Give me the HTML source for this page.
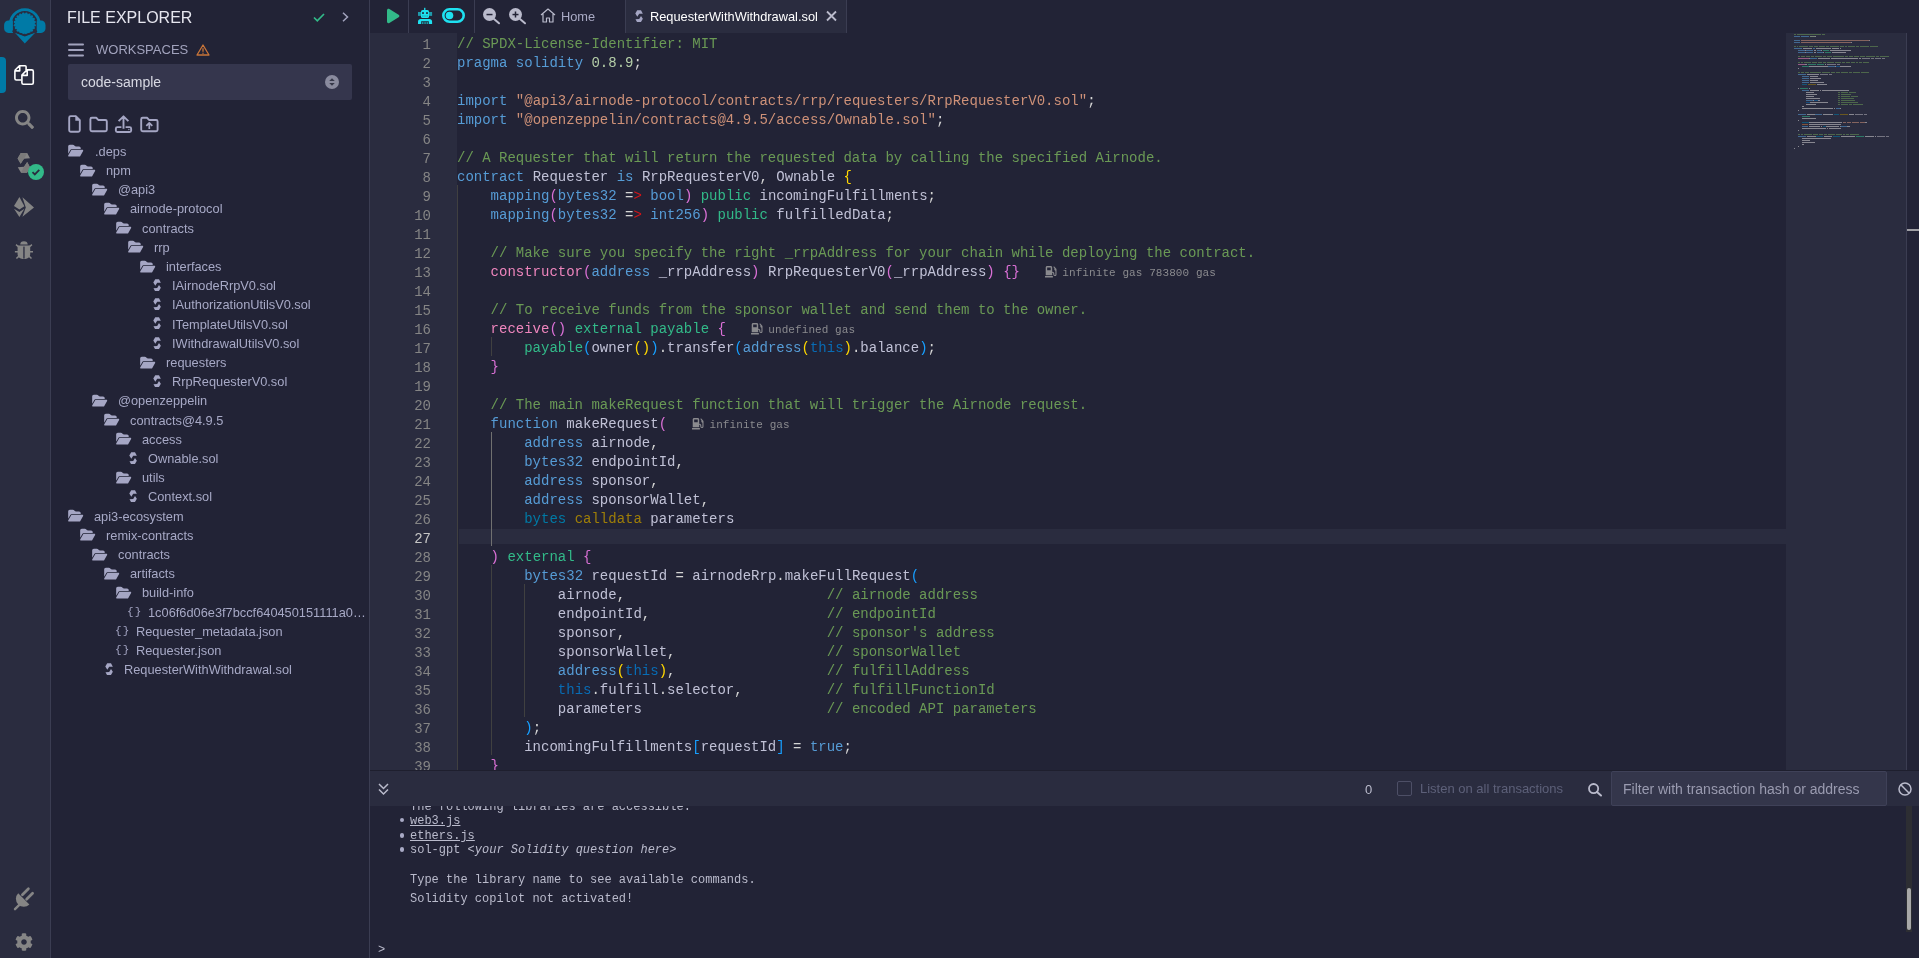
<!DOCTYPE html>
<html><head><meta charset="utf-8">
<style>
*{box-sizing:border-box;margin:0;padding:0}
html,body{width:1919px;height:958px;overflow:hidden;background:#222336;font-family:"Liberation Sans",sans-serif;color:#babbcc}
svg{position:absolute;overflow:visible}
#icons{position:absolute;left:0;top:0;width:50px;height:958px;background:#2a2c3f}
#iconsborder{position:absolute;left:50px;top:0;width:1px;height:958px;background:#3b3d52}
#side{position:absolute;left:51px;top:0;width:318px;height:958px;background:#222336}
#sideborder{position:absolute;left:369px;top:0;width:1px;height:958px;background:#3b3d52}
#gutter{position:absolute;left:370px;top:33px;width:87px;height:737px;background:#2a2c3f}
#editor{position:absolute;left:0;top:0;width:1919px;height:770px;overflow:hidden}
.cl{position:absolute;left:457px;height:19px;line-height:19px;padding-top:2px;font-family:"Liberation Mono",monospace;font-size:14px;color:#d4d4d4;white-space:pre}
.lnum{position:absolute;left:380px;width:51px;text-align:right;height:19px;line-height:19px;padding-top:3px;font-family:"Liberation Mono",monospace;font-size:14px;color:#858585}
.lnum.cur{color:#c6c6c6}
.id{color:#c0c1d6}.c{color:#6a9955}.k{color:#569cd6}.s{color:#ce9178}.n{color:#b5cea8}
.b1{color:#ffd700}.b2{color:#da70d6}.b3{color:#179fff}.r{color:#d31519}
.g{color:#32ba89}.p{color:#ee85bd}.i{color:#086cb5}.bb{color:#007aa6}.l{color:#9e7e08}
.gas{position:absolute;top:3px;margin-left:1px;font-size:11px;letter-spacing:.08px;color:#8a8a8e;white-space:pre}
.pump{position:relative;width:11.5px;height:11.5px;vertical-align:-1px;margin-right:6px}
#curline{position:absolute;left:459px;top:529px;width:1327px;height:15px;background:#2a2c3f}
.guide{position:absolute;width:1px;background:#404040}
#minimap{position:absolute;left:1786px;top:33px;width:120px;height:737px;background:#2a2c3f}
#vscroll{position:absolute;left:1906px;top:33px;width:13px;height:737px;border-left:1px solid #3b3d52}
#tbar{position:absolute;left:370px;top:771px;width:1549px;height:35px;background:#2a2c3f}
#tline{position:absolute;left:370px;top:770px;width:1549px;height:1px;background:#1e1f2e}
.term{position:absolute;font-family:"Liberation Mono",monospace;font-size:12px;color:#babbcc;white-space:pre;line-height:15px}
.tr{position:absolute;font-size:12.8px;color:#a7a9c6;white-space:pre;height:19px;line-height:19px}
.tab{position:absolute;top:0;height:33px}
</style></head><body><div id="root" style="position:absolute;left:0;top:0;width:1919px;height:958px;will-change:transform">
<div id="icons">
  <svg style="left:0;top:0" width="50" height="50" viewBox="0 0 50 50">
    <g fill="#007aa6">
      <path d="M10.7 26.3 A14.3 14.3 0 1 1 38.9 26.3" stroke="#007aa6" stroke-width="2.9" fill="none"/>
      <path d="M8.5 20.5h4.4v12.4H8.5c-2.5 0-4.4-2-4.4-4.4v-3.6c0-2.4 1.9-4.4 4.4-4.4z"/>
      <path d="M41.1 20.5h-4.4v12.4h4.4c2.5 0 4.4-2 4.4-4.4v-3.6c0-2.4-1.9-4.4-4.4-4.4z"/>
      <circle cx="24.8" cy="23.6" r="10"/><circle cx="34.58" cy="25.15" r="1.25"/><circle cx="33.62" cy="28.09" r="1.25"/><circle cx="31.80" cy="30.60" r="1.25"/><circle cx="29.29" cy="32.42" r="1.25"/><circle cx="26.35" cy="33.38" r="1.25"/><circle cx="23.25" cy="33.38" r="1.25"/><circle cx="20.31" cy="32.42" r="1.25"/><circle cx="17.80" cy="30.60" r="1.25"/><circle cx="15.98" cy="28.09" r="1.25"/><circle cx="15.02" cy="25.15" r="1.25"/><circle cx="15.02" cy="22.05" r="1.25"/><circle cx="15.98" cy="19.11" r="1.25"/><circle cx="17.80" cy="16.60" r="1.25"/><circle cx="20.31" cy="14.78" r="1.25"/><circle cx="23.25" cy="13.82" r="1.25"/><circle cx="26.35" cy="13.82" r="1.25"/><circle cx="29.29" cy="14.78" r="1.25"/><circle cx="31.80" cy="16.60" r="1.25"/><circle cx="33.62" cy="19.11" r="1.25"/><circle cx="34.58" cy="22.05" r="1.25"/>
      <polygon points="14.7,32.6 24.8,36.6 35.4,32.6 24.8,43.6"/>
      <polyline points="12.5,31 24.8,35.3 37.1,31" stroke="#2a2c3f" stroke-width="1.5" fill="none"/>
    </g>
  </svg>
  <div style="position:absolute;left:0;top:57px;width:6px;height:36px;background:#007aa6;border-radius:0 4px 4px 0"></div>
  <svg style="left:14px;top:65px" width="21" height="21" viewBox="0 0 21 21">
    <g fill="none" stroke="#fff" stroke-width="1.6" stroke-linejoin="round">
      <path d="M0.9 5.3L5.4 0.8H11.1Q12.1 0.8 12.1 1.8V4.9M7.1 15H2.4Q0.9 15 0.9 13.5V5.3M5.7 0.8V5.9H0.9"/>
      <path d="M7.9 10L13 4.9H17.8Q19.3 4.9 19.3 6.4V17.8Q19.3 19.3 17.8 19.3H9.4Q7.9 19.3 7.9 17.8ZM13.2 4.9V10.4H7.9"/>
    </g>
  </svg>
  <svg style="left:15px;top:110px" width="19" height="19" viewBox="0 0 512 512"><path fill="#858585" d="M505 442.7L405.3 343c-4.5-4.5-10.6-7-17-7H372c27.6-35.3 44-79.7 44-128C416 93.1 322.9 0 208 0S0 93.1 0 208s93.1 208 208 208c48.3 0 92.7-16.4 128-44v16.3c0 6.4 2.5 12.5 7 17l99.7 99.7c9.4 9.4 24.6 9.4 33.9 0l28.3-28.3c9.4-9.4 9.4-24.6.1-34zM208 336c-70.7 0-128-57.2-128-128 0-70.7 57.2-128 128-128 70.7 0 128 57.2 128 128 0 70.7-57.2 128-128 128z"/></svg>
  <svg style="left:17px;top:153px" width="14" height="20" viewBox="0 0 14 20">
    <polygon points="3.8,0 10.2,0 13,5.2 7,5.8 3.6,10.7 0.6,5.4" fill="#858585"/>
    <polygon points="3.8,0 10.2,0 7,5.8 3.6,10.7 0.6,5.4" fill="#7a7a7a"/>
    <polygon points="10.2,9 13,14.3 10,19.7 4,19.7 0.8,14.3 7,13.7" fill="#858585"/>
    <polygon points="10.2,9 13,14.3 10,19.7 4,19.7 7,13.7" fill="#7a7a7a"/>
  </svg>
  <svg style="left:28px;top:164px" width="16" height="16" viewBox="0 0 16 16">
    <circle cx="8" cy="8" r="8" fill="#32ba89"/>
    <path d="M4.5 8.2l2.3 2.2 4.5-4.5" stroke="#2a2c3f" stroke-width="1.8" fill="none"/>
  </svg>
  <svg style="left:10px;top:192px" width="30" height="30" viewBox="10 192 30 30">
    <g fill="#858585">
      <polygon points="19.4,196.9 24.4,206.3 19.4,209.4 14,206"/>
      <polygon points="14,208.8 19.4,212 24.4,208.8 19.4,217"/>
      <polygon points="22.4,197.3 34,207.4 22.4,216.8 25.8,207.4"/>
    </g>
  </svg>
  <svg style="left:10px;top:236px" width="30" height="30" viewBox="10 236 30 30">
    <g fill="#858585">
      <path d="M20.2 244.6a3.75 3.4 0 0 1 7.5 0z"/>
      <path d="M17.6 245.6h12.6v8.4a5 5 0 0 1-5 5h-2.6a5 5 0 0 1-5-5z"/>
    </g>
    <g stroke="#858585" stroke-width="1.5" fill="none">
      <path d="M16 244.6l3 2.6M31.9 244.6l-3 2.6M14.9 251.8h3.5M33 251.8h-3.5M16.4 258.5l2.8-2.6M31.5 258.5l-2.8-2.6"/>
    </g>
    <rect x="23.3" y="246.6" width="1.3" height="12" fill="#2a2c3f"/>
  </svg>
  <svg style="left:0;top:880px" width="50" height="40" viewBox="0 0 50 40">
    <g stroke="#858585" stroke-linecap="round" fill="none">
      <path d="M28.4 8.8L22.4 14.8M32.6 13.2L26.6 19.2" stroke-width="2.7"/>
      <path d="M20.8 23.4L15 29.2" stroke-width="2.4"/>
    </g>
    <path d="M19.8 11.6L31 22.8A7.9 7.9 0 0 1 19.8 11.6z" fill="#858585" transform="translate(-1.6 1.6)"/>
  </svg>
  <svg style="left:15px;top:933px" width="18" height="18" viewBox="0 0 512 512"><path fill="#858585" d="M487.4 315.7l-42.6-24.6c4.3-23.2 4.3-47 0-70.2l42.6-24.6c4.9-2.8 7.1-8.6 5.5-14-11.1-35.6-30-67.8-54.7-94.6-3.8-4.1-10-5.1-14.8-2.3L380.8 110c-17.9-15.4-38.5-27.3-60.8-35.1V25.8c0-5.6-3.9-10.5-9.4-11.7-36.7-8.2-74.3-7.8-109.2 0-5.5 1.2-9.4 6.1-9.4 11.7V75c-22.2 7.9-42.8 19.8-60.8 35.1L88.7 85.5c-4.9-2.8-11-1.9-14.8 2.3-24.7 26.7-43.6 58.9-54.7 94.6-1.7 5.4.6 11.2 5.5 14L67.3 221c-4.3 23.2-4.3 47 0 70.2l-42.6 24.6c-4.9 2.8-7.1 8.6-5.5 14 11.1 35.6 30 67.8 54.7 94.6 3.8 4.1 10 5.1 14.8 2.3l42.6-24.6c17.9 15.4 38.5 27.3 60.8 35.1v49.2c0 5.6 3.9 10.5 9.4 11.7 36.7 8.2 74.3 7.8 109.2 0 5.5-1.2 9.4-6.1 9.4-11.7v-49.2c22.2-7.9 42.8-19.8 60.8-35.1l42.6 24.6c4.9 2.8 11 1.9 14.8-2.3 24.7-26.7 43.6-58.9 54.7-94.6 1.5-5.5-.7-11.3-5.6-14.1zM256 336c-44.1 0-80-35.9-80-80s35.9-80 80-80 80 35.9 80 80-35.9 80-80 80z"/></svg>
</div>
<div id="iconsborder"></div>
<div id="side">
<div class="tr" style="left:16px;top:6px;font-size:16px;color:#e6e6ef;height:24px;line-height:24px">FILE EXPLORER</div>
<svg style="left:262px;top:13px" width="12" height="9" viewBox="0 0 12 9"><path d="M1 4.5l3.3 3.3L11 1" stroke="#32ba89" stroke-width="1.7" fill="none"/></svg>
<svg style="left:291px;top:12px" width="7" height="10" viewBox="0 0 7 10"><path d="M1 .8l4.5 4.2L1 9.2" stroke="#a2a3bd" stroke-width="1.5" fill="none"/></svg>
<svg style="left:17px;top:43px" width="16" height="14" viewBox="0 0 16 14"><g fill="#a2a3bd"><rect x="0" y="0.5" width="16" height="2" rx="1"/><rect x="0" y="6" width="16" height="2" rx="1"/><rect x="0" y="11.5" width="16" height="2" rx="1"/></g></svg>
<div class="tr" style="left:45px;top:40px;font-size:13px;color:#a2a3bd">WORKSPACES</div>
<svg style="left:145px;top:44px" width="14" height="12" viewBox="0 0 14 12"><path d="M7 1L13 11H1z" stroke="#c97539" stroke-width="1.3" fill="none" stroke-linejoin="round"/><path d="M7 4.3v3.4" stroke="#c97539" stroke-width="1.3"/><circle cx="7" cy="9.3" r=".7" fill="#c97539"/></svg>
<div style="position:absolute;left:17px;top:64px;width:284px;height:36px;background:#35364d;border-radius:2px"></div>
<div class="tr" style="left:30px;top:72px;font-size:14px;color:#d8d9e3;height:20px;line-height:20px">code-sample</div>
<svg style="left:274px;top:75px" width="14" height="14" viewBox="0 0 14 14"><circle cx="7" cy="7" r="7" fill="#8a8b9e"/><path d="M4.2 6L7 3.3 9.8 6zM4.2 8L7 10.7 9.8 8z" fill="#363849"/></svg>
<svg style="left:11px;top:110px" width="100" height="30" viewBox="62 110 100 30"><g fill="none" stroke="#a5a6c4" stroke-width="1.9" stroke-linejoin="round"><path d="M70.7 116.15h5.1l4 4v10.1q0 1.5-1.5 1.5h-7.6q-1.5 0-1.5-1.5v-12.6q0-1.5 1.5-1.5z"/><path d="M91.9 117.75h4.3l2.3 2.3h6.8q1.5 0 1.5 1.5v8.2q0 1.5-1.5 1.5h-13.4q-1.5 0-1.5-1.5v-10.5q0-1.5 1.5-1.5z"/><path d="M121.4 127.15h-4.05q-1.5 0-1.5 1.5v1.8q0 1.5 1.5 1.5h12.3q1.5 0 1.5-1.5v-1.8q0-1.5-1.5-1.5h-4.05M123.5 116.5v12.3M118.6 121.2l4.9-4.9 4.9 4.9"/><path d="M142.7 117.75h4.3l2.3 2.3h6.8q1.5 0 1.5 1.5v8.2q0 1.5-1.5 1.5h-13.4q-1.5 0-1.5-1.5v-10.5q0-1.5 1.5-1.5z"/><path d="M149.3 123v6M146.3 125.8l3-3 3 3" stroke-width="1.7"/></g><polygon points="75.3,115.6 80.4,120.7 75.3,120.7" fill="#a5a6c4"/><polygon points="128.3,128.7 130,129.5 128.3,130.3" fill="#a5a6c4"/></svg>
<svg style="left:16.8px;top:144.4px" width="15.4" height="13.4" viewBox="0 0 576 512"><path fill="#a5a6c4" d="M88.7 223.8L0 375.8V96C0 60.7 28.7 32 64 32H181.5c17 0 33.3 6.7 45.3 18.7l26.5 26.5c12 12 28.3 18.7 45.3 18.7H416c35.3 0 64 28.7 64 64v32H144c-22.8 0-43.8 12.1-55.3 31.8zm27.6 16.1C122.1 230 132.6 224 144 224H544c11.5 0 22 6.1 27.7 16.1s5.7 22.2-.1 32.1l-112 192C453.9 474 443.4 480 432 480H32c-11.5 0-22-6.1-27.7-16.1s-5.7-22.2 .1-32.1l112-192z"/></svg>
<div class="tr" style="left:44px;top:141.8px">.deps</div>
<svg style="left:28.8px;top:163.6px" width="15.4" height="13.4" viewBox="0 0 576 512"><path fill="#a5a6c4" d="M88.7 223.8L0 375.8V96C0 60.7 28.7 32 64 32H181.5c17 0 33.3 6.7 45.3 18.7l26.5 26.5c12 12 28.3 18.7 45.3 18.7H416c35.3 0 64 28.7 64 64v32H144c-22.8 0-43.8 12.1-55.3 31.8zm27.6 16.1C122.1 230 132.6 224 144 224H544c11.5 0 22 6.1 27.7 16.1s5.7 22.2-.1 32.1l-112 192C453.9 474 443.4 480 432 480H32c-11.5 0-22-6.1-27.7-16.1s-5.7-22.2 .1-32.1l112-192z"/></svg>
<div class="tr" style="left:55px;top:161.0px">npm</div>
<svg style="left:40.8px;top:182.8px" width="15.4" height="13.4" viewBox="0 0 576 512"><path fill="#a5a6c4" d="M88.7 223.8L0 375.8V96C0 60.7 28.7 32 64 32H181.5c17 0 33.3 6.7 45.3 18.7l26.5 26.5c12 12 28.3 18.7 45.3 18.7H416c35.3 0 64 28.7 64 64v32H144c-22.8 0-43.8 12.1-55.3 31.8zm27.6 16.1C122.1 230 132.6 224 144 224H544c11.5 0 22 6.1 27.7 16.1s5.7 22.2-.1 32.1l-112 192C453.9 474 443.4 480 432 480H32c-11.5 0-22-6.1-27.7-16.1s-5.7-22.2 .1-32.1l112-192z"/></svg>
<div class="tr" style="left:67px;top:180.2px">@api3</div>
<svg style="left:52.8px;top:202.0px" width="15.4" height="13.4" viewBox="0 0 576 512"><path fill="#a5a6c4" d="M88.7 223.8L0 375.8V96C0 60.7 28.7 32 64 32H181.5c17 0 33.3 6.7 45.3 18.7l26.5 26.5c12 12 28.3 18.7 45.3 18.7H416c35.3 0 64 28.7 64 64v32H144c-22.8 0-43.8 12.1-55.3 31.8zm27.6 16.1C122.1 230 132.6 224 144 224H544c11.5 0 22 6.1 27.7 16.1s5.7 22.2-.1 32.1l-112 192C453.9 474 443.4 480 432 480H32c-11.5 0-22-6.1-27.7-16.1s-5.7-22.2 .1-32.1l112-192z"/></svg>
<div class="tr" style="left:79px;top:199.4px">airnode-protocol</div>
<svg style="left:64.8px;top:221.2px" width="15.4" height="13.4" viewBox="0 0 576 512"><path fill="#a5a6c4" d="M88.7 223.8L0 375.8V96C0 60.7 28.7 32 64 32H181.5c17 0 33.3 6.7 45.3 18.7l26.5 26.5c12 12 28.3 18.7 45.3 18.7H416c35.3 0 64 28.7 64 64v32H144c-22.8 0-43.8 12.1-55.3 31.8zm27.6 16.1C122.1 230 132.6 224 144 224H544c11.5 0 22 6.1 27.7 16.1s5.7 22.2-.1 32.1l-112 192C453.9 474 443.4 480 432 480H32c-11.5 0-22-6.1-27.7-16.1s-5.7-22.2 .1-32.1l112-192z"/></svg>
<div class="tr" style="left:91px;top:218.6px">contracts</div>
<svg style="left:76.8px;top:240.4px" width="15.4" height="13.4" viewBox="0 0 576 512"><path fill="#a5a6c4" d="M88.7 223.8L0 375.8V96C0 60.7 28.7 32 64 32H181.5c17 0 33.3 6.7 45.3 18.7l26.5 26.5c12 12 28.3 18.7 45.3 18.7H416c35.3 0 64 28.7 64 64v32H144c-22.8 0-43.8 12.1-55.3 31.8zm27.6 16.1C122.1 230 132.6 224 144 224H544c11.5 0 22 6.1 27.7 16.1s5.7 22.2-.1 32.1l-112 192C453.9 474 443.4 480 432 480H32c-11.5 0-22-6.1-27.7-16.1s-5.7-22.2 .1-32.1l112-192z"/></svg>
<div class="tr" style="left:103px;top:237.8px">rrp</div>
<svg style="left:88.8px;top:259.6px" width="15.4" height="13.4" viewBox="0 0 576 512"><path fill="#a5a6c4" d="M88.7 223.8L0 375.8V96C0 60.7 28.7 32 64 32H181.5c17 0 33.3 6.7 45.3 18.7l26.5 26.5c12 12 28.3 18.7 45.3 18.7H416c35.3 0 64 28.7 64 64v32H144c-22.8 0-43.8 12.1-55.3 31.8zm27.6 16.1C122.1 230 132.6 224 144 224H544c11.5 0 22 6.1 27.7 16.1s5.7 22.2-.1 32.1l-112 192C453.9 474 443.4 480 432 480H32c-11.5 0-22-6.1-27.7-16.1s-5.7-22.2 .1-32.1l112-192z"/></svg>
<div class="tr" style="left:115px;top:257.0px">interfaces</div>
<svg style="left:102px;top:279.0px" width="8" height="12" viewBox="0 0 8 12"><polygon points="2.2,0.2 6,0.2 7.85,3.7 4.2,3.85 2.3,6.7 0.3,3.5" fill="#a5a6c4"/><polygon points="6,6 7.85,8.7 6,12 2,12 0.5,9.3 4.2,8.9" fill="#a5a6c4"/></svg>
<div class="tr" style="left:121px;top:276.2px">IAirnodeRrpV0.sol</div>
<svg style="left:102px;top:298.2px" width="8" height="12" viewBox="0 0 8 12"><polygon points="2.2,0.2 6,0.2 7.85,3.7 4.2,3.85 2.3,6.7 0.3,3.5" fill="#a5a6c4"/><polygon points="6,6 7.85,8.7 6,12 2,12 0.5,9.3 4.2,8.9" fill="#a5a6c4"/></svg>
<div class="tr" style="left:121px;top:295.4px">IAuthorizationUtilsV0.sol</div>
<svg style="left:102px;top:317.4px" width="8" height="12" viewBox="0 0 8 12"><polygon points="2.2,0.2 6,0.2 7.85,3.7 4.2,3.85 2.3,6.7 0.3,3.5" fill="#a5a6c4"/><polygon points="6,6 7.85,8.7 6,12 2,12 0.5,9.3 4.2,8.9" fill="#a5a6c4"/></svg>
<div class="tr" style="left:121px;top:314.6px">ITemplateUtilsV0.sol</div>
<svg style="left:102px;top:336.6px" width="8" height="12" viewBox="0 0 8 12"><polygon points="2.2,0.2 6,0.2 7.85,3.7 4.2,3.85 2.3,6.7 0.3,3.5" fill="#a5a6c4"/><polygon points="6,6 7.85,8.7 6,12 2,12 0.5,9.3 4.2,8.9" fill="#a5a6c4"/></svg>
<div class="tr" style="left:121px;top:333.8px">IWithdrawalUtilsV0.sol</div>
<svg style="left:88.8px;top:355.6px" width="15.4" height="13.4" viewBox="0 0 576 512"><path fill="#a5a6c4" d="M88.7 223.8L0 375.8V96C0 60.7 28.7 32 64 32H181.5c17 0 33.3 6.7 45.3 18.7l26.5 26.5c12 12 28.3 18.7 45.3 18.7H416c35.3 0 64 28.7 64 64v32H144c-22.8 0-43.8 12.1-55.3 31.8zm27.6 16.1C122.1 230 132.6 224 144 224H544c11.5 0 22 6.1 27.7 16.1s5.7 22.2-.1 32.1l-112 192C453.9 474 443.4 480 432 480H32c-11.5 0-22-6.1-27.7-16.1s-5.7-22.2 .1-32.1l112-192z"/></svg>
<div class="tr" style="left:115px;top:353.0px">requesters</div>
<svg style="left:102px;top:375.0px" width="8" height="12" viewBox="0 0 8 12"><polygon points="2.2,0.2 6,0.2 7.85,3.7 4.2,3.85 2.3,6.7 0.3,3.5" fill="#a5a6c4"/><polygon points="6,6 7.85,8.7 6,12 2,12 0.5,9.3 4.2,8.9" fill="#a5a6c4"/></svg>
<div class="tr" style="left:121px;top:372.2px">RrpRequesterV0.sol</div>
<svg style="left:40.8px;top:394.0px" width="15.4" height="13.4" viewBox="0 0 576 512"><path fill="#a5a6c4" d="M88.7 223.8L0 375.8V96C0 60.7 28.7 32 64 32H181.5c17 0 33.3 6.7 45.3 18.7l26.5 26.5c12 12 28.3 18.7 45.3 18.7H416c35.3 0 64 28.7 64 64v32H144c-22.8 0-43.8 12.1-55.3 31.8zm27.6 16.1C122.1 230 132.6 224 144 224H544c11.5 0 22 6.1 27.7 16.1s5.7 22.2-.1 32.1l-112 192C453.9 474 443.4 480 432 480H32c-11.5 0-22-6.1-27.7-16.1s-5.7-22.2 .1-32.1l112-192z"/></svg>
<div class="tr" style="left:67px;top:391.4px">@openzeppelin</div>
<svg style="left:52.8px;top:413.2px" width="15.4" height="13.4" viewBox="0 0 576 512"><path fill="#a5a6c4" d="M88.7 223.8L0 375.8V96C0 60.7 28.7 32 64 32H181.5c17 0 33.3 6.7 45.3 18.7l26.5 26.5c12 12 28.3 18.7 45.3 18.7H416c35.3 0 64 28.7 64 64v32H144c-22.8 0-43.8 12.1-55.3 31.8zm27.6 16.1C122.1 230 132.6 224 144 224H544c11.5 0 22 6.1 27.7 16.1s5.7 22.2-.1 32.1l-112 192C453.9 474 443.4 480 432 480H32c-11.5 0-22-6.1-27.7-16.1s-5.7-22.2 .1-32.1l112-192z"/></svg>
<div class="tr" style="left:79px;top:410.6px">contracts@4.9.5</div>
<svg style="left:64.8px;top:432.4px" width="15.4" height="13.4" viewBox="0 0 576 512"><path fill="#a5a6c4" d="M88.7 223.8L0 375.8V96C0 60.7 28.7 32 64 32H181.5c17 0 33.3 6.7 45.3 18.7l26.5 26.5c12 12 28.3 18.7 45.3 18.7H416c35.3 0 64 28.7 64 64v32H144c-22.8 0-43.8 12.1-55.3 31.8zm27.6 16.1C122.1 230 132.6 224 144 224H544c11.5 0 22 6.1 27.7 16.1s5.7 22.2-.1 32.1l-112 192C453.9 474 443.4 480 432 480H32c-11.5 0-22-6.1-27.7-16.1s-5.7-22.2 .1-32.1l112-192z"/></svg>
<div class="tr" style="left:91px;top:429.8px">access</div>
<svg style="left:78px;top:451.8px" width="8" height="12" viewBox="0 0 8 12"><polygon points="2.2,0.2 6,0.2 7.85,3.7 4.2,3.85 2.3,6.7 0.3,3.5" fill="#a5a6c4"/><polygon points="6,6 7.85,8.7 6,12 2,12 0.5,9.3 4.2,8.9" fill="#a5a6c4"/></svg>
<div class="tr" style="left:97px;top:449.0px">Ownable.sol</div>
<svg style="left:64.8px;top:470.8px" width="15.4" height="13.4" viewBox="0 0 576 512"><path fill="#a5a6c4" d="M88.7 223.8L0 375.8V96C0 60.7 28.7 32 64 32H181.5c17 0 33.3 6.7 45.3 18.7l26.5 26.5c12 12 28.3 18.7 45.3 18.7H416c35.3 0 64 28.7 64 64v32H144c-22.8 0-43.8 12.1-55.3 31.8zm27.6 16.1C122.1 230 132.6 224 144 224H544c11.5 0 22 6.1 27.7 16.1s5.7 22.2-.1 32.1l-112 192C453.9 474 443.4 480 432 480H32c-11.5 0-22-6.1-27.7-16.1s-5.7-22.2 .1-32.1l112-192z"/></svg>
<div class="tr" style="left:91px;top:468.2px">utils</div>
<svg style="left:78px;top:490.2px" width="8" height="12" viewBox="0 0 8 12"><polygon points="2.2,0.2 6,0.2 7.85,3.7 4.2,3.85 2.3,6.7 0.3,3.5" fill="#a5a6c4"/><polygon points="6,6 7.85,8.7 6,12 2,12 0.5,9.3 4.2,8.9" fill="#a5a6c4"/></svg>
<div class="tr" style="left:97px;top:487.4px">Context.sol</div>
<svg style="left:16.8px;top:509.2px" width="15.4" height="13.4" viewBox="0 0 576 512"><path fill="#a5a6c4" d="M88.7 223.8L0 375.8V96C0 60.7 28.7 32 64 32H181.5c17 0 33.3 6.7 45.3 18.7l26.5 26.5c12 12 28.3 18.7 45.3 18.7H416c35.3 0 64 28.7 64 64v32H144c-22.8 0-43.8 12.1-55.3 31.8zm27.6 16.1C122.1 230 132.6 224 144 224H544c11.5 0 22 6.1 27.7 16.1s5.7 22.2-.1 32.1l-112 192C453.9 474 443.4 480 432 480H32c-11.5 0-22-6.1-27.7-16.1s-5.7-22.2 .1-32.1l112-192z"/></svg>
<div class="tr" style="left:43px;top:506.6px">api3-ecosystem</div>
<svg style="left:28.8px;top:528.4px" width="15.4" height="13.4" viewBox="0 0 576 512"><path fill="#a5a6c4" d="M88.7 223.8L0 375.8V96C0 60.7 28.7 32 64 32H181.5c17 0 33.3 6.7 45.3 18.7l26.5 26.5c12 12 28.3 18.7 45.3 18.7H416c35.3 0 64 28.7 64 64v32H144c-22.8 0-43.8 12.1-55.3 31.8zm27.6 16.1C122.1 230 132.6 224 144 224H544c11.5 0 22 6.1 27.7 16.1s5.7 22.2-.1 32.1l-112 192C453.9 474 443.4 480 432 480H32c-11.5 0-22-6.1-27.7-16.1s-5.7-22.2 .1-32.1l112-192z"/></svg>
<div class="tr" style="left:55px;top:525.8px">remix-contracts</div>
<svg style="left:40.8px;top:547.6px" width="15.4" height="13.4" viewBox="0 0 576 512"><path fill="#a5a6c4" d="M88.7 223.8L0 375.8V96C0 60.7 28.7 32 64 32H181.5c17 0 33.3 6.7 45.3 18.7l26.5 26.5c12 12 28.3 18.7 45.3 18.7H416c35.3 0 64 28.7 64 64v32H144c-22.8 0-43.8 12.1-55.3 31.8zm27.6 16.1C122.1 230 132.6 224 144 224H544c11.5 0 22 6.1 27.7 16.1s5.7 22.2-.1 32.1l-112 192C453.9 474 443.4 480 432 480H32c-11.5 0-22-6.1-27.7-16.1s-5.7-22.2 .1-32.1l112-192z"/></svg>
<div class="tr" style="left:67px;top:545.0px">contracts</div>
<svg style="left:52.8px;top:566.8px" width="15.4" height="13.4" viewBox="0 0 576 512"><path fill="#a5a6c4" d="M88.7 223.8L0 375.8V96C0 60.7 28.7 32 64 32H181.5c17 0 33.3 6.7 45.3 18.7l26.5 26.5c12 12 28.3 18.7 45.3 18.7H416c35.3 0 64 28.7 64 64v32H144c-22.8 0-43.8 12.1-55.3 31.8zm27.6 16.1C122.1 230 132.6 224 144 224H544c11.5 0 22 6.1 27.7 16.1s5.7 22.2-.1 32.1l-112 192C453.9 474 443.4 480 432 480H32c-11.5 0-22-6.1-27.7-16.1s-5.7-22.2 .1-32.1l112-192z"/></svg>
<div class="tr" style="left:79px;top:564.2px">artifacts</div>
<svg style="left:64.8px;top:586.0px" width="15.4" height="13.4" viewBox="0 0 576 512"><path fill="#a5a6c4" d="M88.7 223.8L0 375.8V96C0 60.7 28.7 32 64 32H181.5c17 0 33.3 6.7 45.3 18.7l26.5 26.5c12 12 28.3 18.7 45.3 18.7H416c35.3 0 64 28.7 64 64v32H144c-22.8 0-43.8 12.1-55.3 31.8zm27.6 16.1C122.1 230 132.6 224 144 224H544c11.5 0 22 6.1 27.7 16.1s5.7 22.2-.1 32.1l-112 192C453.9 474 443.4 480 432 480H32c-11.5 0-22-6.1-27.7-16.1s-5.7-22.2 .1-32.1l112-192z"/></svg>
<div class="tr" style="left:91px;top:583.4px">build-info</div>
<div class="tr" style="left:77px;top:602.6px;font-family:'Liberation Mono',monospace;font-size:11px;letter-spacing:1.2px;color:#a5a6c4;margin-left:-1px">{}</div>
<div class="tr" style="left:97px;top:602.6px">1c06f6d06e3f7bccf640450151111a0…</div>
<div class="tr" style="left:65px;top:621.8px;font-family:'Liberation Mono',monospace;font-size:11px;letter-spacing:1.2px;color:#a5a6c4;margin-left:-1px">{}</div>
<div class="tr" style="left:85px;top:621.8px">Requester_metadata.json</div>
<div class="tr" style="left:65px;top:641.0px;font-family:'Liberation Mono',monospace;font-size:11px;letter-spacing:1.2px;color:#a5a6c4;margin-left:-1px">{}</div>
<div class="tr" style="left:85px;top:641.0px">Requester.json</div>
<svg style="left:54px;top:663.0px" width="8" height="12" viewBox="0 0 8 12"><polygon points="2.2,0.2 6,0.2 7.85,3.7 4.2,3.85 2.3,6.7 0.3,3.5" fill="#a5a6c4"/><polygon points="6,6 7.85,8.7 6,12 2,12 0.5,9.3 4.2,8.9" fill="#a5a6c4"/></svg>
<div class="tr" style="left:73px;top:660.2px">RequesterWithWithdrawal.sol</div>
</div>
<div id="sideborder"></div>
<div id="gutter"></div>
<div id="curline"></div>
<div id="minimap"><div style="position:absolute;left:8px;top:0.5px;width:2px;height:1.6px;background:#6a9955;opacity:.55"></div><div style="position:absolute;left:11px;top:0.5px;width:24px;height:1.6px;background:#6a9955;opacity:.55"></div><div style="position:absolute;left:36px;top:0.5px;width:3px;height:1.6px;background:#6a9955;opacity:.55"></div><div style="position:absolute;left:8px;top:2.5px;width:6px;height:1.6px;background:#569cd6;opacity:.55"></div><div style="position:absolute;left:15px;top:2.5px;width:8px;height:1.6px;background:#569cd6;opacity:.55"></div><div style="position:absolute;left:24px;top:2.5px;width:5px;height:1.6px;background:#b5cea8;opacity:.55"></div><div style="position:absolute;left:29px;top:2.5px;width:1px;height:1.6px;background:#d4d4d4;opacity:.55"></div><div style="position:absolute;left:8px;top:6.5px;width:6px;height:1.6px;background:#569cd6;opacity:.55"></div><div style="position:absolute;left:15px;top:6.5px;width:68px;height:1.6px;background:#ce9178;opacity:.55"></div><div style="position:absolute;left:83px;top:6.5px;width:1px;height:1.6px;background:#d4d4d4;opacity:.55"></div><div style="position:absolute;left:8px;top:8.5px;width:6px;height:1.6px;background:#569cd6;opacity:.55"></div><div style="position:absolute;left:15px;top:8.5px;width:50px;height:1.6px;background:#ce9178;opacity:.55"></div><div style="position:absolute;left:65px;top:8.5px;width:1px;height:1.6px;background:#d4d4d4;opacity:.55"></div><div style="position:absolute;left:8px;top:12.5px;width:2px;height:1.6px;background:#6a9955;opacity:.55"></div><div style="position:absolute;left:11px;top:12.5px;width:1px;height:1.6px;background:#6a9955;opacity:.55"></div><div style="position:absolute;left:13px;top:12.5px;width:9px;height:1.6px;background:#6a9955;opacity:.55"></div><div style="position:absolute;left:23px;top:12.5px;width:4px;height:1.6px;background:#6a9955;opacity:.55"></div><div style="position:absolute;left:28px;top:12.5px;width:4px;height:1.6px;background:#6a9955;opacity:.55"></div><div style="position:absolute;left:33px;top:12.5px;width:6px;height:1.6px;background:#6a9955;opacity:.55"></div><div style="position:absolute;left:40px;top:12.5px;width:3px;height:1.6px;background:#6a9955;opacity:.55"></div><div style="position:absolute;left:44px;top:12.5px;width:9px;height:1.6px;background:#6a9955;opacity:.55"></div><div style="position:absolute;left:54px;top:12.5px;width:4px;height:1.6px;background:#6a9955;opacity:.55"></div><div style="position:absolute;left:59px;top:12.5px;width:2px;height:1.6px;background:#6a9955;opacity:.55"></div><div style="position:absolute;left:62px;top:12.5px;width:7px;height:1.6px;background:#6a9955;opacity:.55"></div><div style="position:absolute;left:70px;top:12.5px;width:3px;height:1.6px;background:#6a9955;opacity:.55"></div><div style="position:absolute;left:74px;top:12.5px;width:9px;height:1.6px;background:#6a9955;opacity:.55"></div><div style="position:absolute;left:84px;top:12.5px;width:8px;height:1.6px;background:#6a9955;opacity:.55"></div><div style="position:absolute;left:8px;top:14.5px;width:8px;height:1.6px;background:#569cd6;opacity:.55"></div><div style="position:absolute;left:17px;top:14.5px;width:9px;height:1.6px;background:#d4d4d4;opacity:.55"></div><div style="position:absolute;left:27px;top:14.5px;width:2px;height:1.6px;background:#569cd6;opacity:.55"></div><div style="position:absolute;left:30px;top:14.5px;width:15px;height:1.6px;background:#d4d4d4;opacity:.55"></div><div style="position:absolute;left:46px;top:14.5px;width:7px;height:1.6px;background:#d4d4d4;opacity:.55"></div><div style="position:absolute;left:54px;top:14.5px;width:1px;height:1.6px;background:#d4d4d4;opacity:.55"></div><div style="position:absolute;left:12px;top:16.5px;width:7px;height:1.6px;background:#569cd6;opacity:.55"></div><div style="position:absolute;left:19px;top:16.5px;width:1px;height:1.6px;background:#d4d4d4;opacity:.55"></div><div style="position:absolute;left:20px;top:16.5px;width:7px;height:1.6px;background:#569cd6;opacity:.55"></div><div style="position:absolute;left:28px;top:16.5px;width:1px;height:1.6px;background:#d4d4d4;opacity:.55"></div><div style="position:absolute;left:29px;top:16.5px;width:1px;height:1.6px;background:#d4d4d4;opacity:.55"></div><div style="position:absolute;left:31px;top:16.5px;width:4px;height:1.6px;background:#569cd6;opacity:.55"></div><div style="position:absolute;left:35px;top:16.5px;width:1px;height:1.6px;background:#d4d4d4;opacity:.55"></div><div style="position:absolute;left:37px;top:16.5px;width:6px;height:1.6px;background:#32ba89;opacity:.55"></div><div style="position:absolute;left:44px;top:16.5px;width:21px;height:1.6px;background:#d4d4d4;opacity:.55"></div><div style="position:absolute;left:12px;top:18.5px;width:7px;height:1.6px;background:#569cd6;opacity:.55"></div><div style="position:absolute;left:19px;top:18.5px;width:1px;height:1.6px;background:#d4d4d4;opacity:.55"></div><div style="position:absolute;left:20px;top:18.5px;width:7px;height:1.6px;background:#569cd6;opacity:.55"></div><div style="position:absolute;left:28px;top:18.5px;width:1px;height:1.6px;background:#d4d4d4;opacity:.55"></div><div style="position:absolute;left:29px;top:18.5px;width:1px;height:1.6px;background:#d4d4d4;opacity:.55"></div><div style="position:absolute;left:31px;top:18.5px;width:6px;height:1.6px;background:#569cd6;opacity:.55"></div><div style="position:absolute;left:37px;top:18.5px;width:1px;height:1.6px;background:#d4d4d4;opacity:.55"></div><div style="position:absolute;left:39px;top:18.5px;width:6px;height:1.6px;background:#32ba89;opacity:.55"></div><div style="position:absolute;left:46px;top:18.5px;width:14px;height:1.6px;background:#d4d4d4;opacity:.55"></div><div style="position:absolute;left:12px;top:22.5px;width:2px;height:1.6px;background:#6a9955;opacity:.55"></div><div style="position:absolute;left:15px;top:22.5px;width:4px;height:1.6px;background:#6a9955;opacity:.55"></div><div style="position:absolute;left:20px;top:22.5px;width:4px;height:1.6px;background:#6a9955;opacity:.55"></div><div style="position:absolute;left:25px;top:22.5px;width:3px;height:1.6px;background:#6a9955;opacity:.55"></div><div style="position:absolute;left:29px;top:22.5px;width:7px;height:1.6px;background:#6a9955;opacity:.55"></div><div style="position:absolute;left:37px;top:22.5px;width:3px;height:1.6px;background:#6a9955;opacity:.55"></div><div style="position:absolute;left:41px;top:22.5px;width:5px;height:1.6px;background:#6a9955;opacity:.55"></div><div style="position:absolute;left:47px;top:22.5px;width:11px;height:1.6px;background:#6a9955;opacity:.55"></div><div style="position:absolute;left:59px;top:22.5px;width:3px;height:1.6px;background:#6a9955;opacity:.55"></div><div style="position:absolute;left:63px;top:22.5px;width:4px;height:1.6px;background:#6a9955;opacity:.55"></div><div style="position:absolute;left:68px;top:22.5px;width:5px;height:1.6px;background:#6a9955;opacity:.55"></div><div style="position:absolute;left:74px;top:22.5px;width:5px;height:1.6px;background:#6a9955;opacity:.55"></div><div style="position:absolute;left:80px;top:22.5px;width:9px;height:1.6px;background:#6a9955;opacity:.55"></div><div style="position:absolute;left:90px;top:22.5px;width:3px;height:1.6px;background:#6a9955;opacity:.55"></div><div style="position:absolute;left:94px;top:22.5px;width:9px;height:1.6px;background:#6a9955;opacity:.55"></div><div style="position:absolute;left:12px;top:24.5px;width:11px;height:1.6px;background:#ee85bd;opacity:.55"></div><div style="position:absolute;left:23px;top:24.5px;width:1px;height:1.6px;background:#d4d4d4;opacity:.55"></div><div style="position:absolute;left:24px;top:24.5px;width:7px;height:1.6px;background:#569cd6;opacity:.55"></div><div style="position:absolute;left:32px;top:24.5px;width:11px;height:1.6px;background:#d4d4d4;opacity:.55"></div><div style="position:absolute;left:43px;top:24.5px;width:1px;height:1.6px;background:#d4d4d4;opacity:.55"></div><div style="position:absolute;left:45px;top:24.5px;width:14px;height:1.6px;background:#d4d4d4;opacity:.55"></div><div style="position:absolute;left:59px;top:24.5px;width:1px;height:1.6px;background:#d4d4d4;opacity:.55"></div><div style="position:absolute;left:60px;top:24.5px;width:11px;height:1.6px;background:#d4d4d4;opacity:.55"></div><div style="position:absolute;left:71px;top:24.5px;width:1px;height:1.6px;background:#d4d4d4;opacity:.55"></div><div style="position:absolute;left:73px;top:24.5px;width:2px;height:1.6px;background:#d4d4d4;opacity:.55"></div><div style="position:absolute;left:76px;top:24.5px;width:8px;height:1.6px;background:#b0b0b8;opacity:.55"></div><div style="position:absolute;left:85px;top:24.5px;width:3px;height:1.6px;background:#b0b0b8;opacity:.55"></div><div style="position:absolute;left:89px;top:24.5px;width:6px;height:1.6px;background:#b0b0b8;opacity:.55"></div><div style="position:absolute;left:96px;top:24.5px;width:3px;height:1.6px;background:#b0b0b8;opacity:.55"></div><div style="position:absolute;left:12px;top:28.5px;width:2px;height:1.6px;background:#6a9955;opacity:.55"></div><div style="position:absolute;left:15px;top:28.5px;width:2px;height:1.6px;background:#6a9955;opacity:.55"></div><div style="position:absolute;left:18px;top:28.5px;width:7px;height:1.6px;background:#6a9955;opacity:.55"></div><div style="position:absolute;left:26px;top:28.5px;width:5px;height:1.6px;background:#6a9955;opacity:.55"></div><div style="position:absolute;left:32px;top:28.5px;width:4px;height:1.6px;background:#6a9955;opacity:.55"></div><div style="position:absolute;left:37px;top:28.5px;width:3px;height:1.6px;background:#6a9955;opacity:.55"></div><div style="position:absolute;left:41px;top:28.5px;width:7px;height:1.6px;background:#6a9955;opacity:.55"></div><div style="position:absolute;left:49px;top:28.5px;width:6px;height:1.6px;background:#6a9955;opacity:.55"></div><div style="position:absolute;left:56px;top:28.5px;width:3px;height:1.6px;background:#6a9955;opacity:.55"></div><div style="position:absolute;left:60px;top:28.5px;width:4px;height:1.6px;background:#6a9955;opacity:.55"></div><div style="position:absolute;left:65px;top:28.5px;width:4px;height:1.6px;background:#6a9955;opacity:.55"></div><div style="position:absolute;left:70px;top:28.5px;width:2px;height:1.6px;background:#6a9955;opacity:.55"></div><div style="position:absolute;left:73px;top:28.5px;width:3px;height:1.6px;background:#6a9955;opacity:.55"></div><div style="position:absolute;left:77px;top:28.5px;width:6px;height:1.6px;background:#6a9955;opacity:.55"></div><div style="position:absolute;left:12px;top:30.5px;width:7px;height:1.6px;background:#ee85bd;opacity:.55"></div><div style="position:absolute;left:19px;top:30.5px;width:2px;height:1.6px;background:#d4d4d4;opacity:.55"></div><div style="position:absolute;left:22px;top:30.5px;width:8px;height:1.6px;background:#32ba89;opacity:.55"></div><div style="position:absolute;left:31px;top:30.5px;width:7px;height:1.6px;background:#32ba89;opacity:.55"></div><div style="position:absolute;left:39px;top:30.5px;width:1px;height:1.6px;background:#d4d4d4;opacity:.55"></div><div style="position:absolute;left:41px;top:30.5px;width:9px;height:1.6px;background:#b0b0b8;opacity:.55"></div><div style="position:absolute;left:51px;top:30.5px;width:3px;height:1.6px;background:#b0b0b8;opacity:.55"></div><div style="position:absolute;left:16px;top:32.5px;width:7px;height:1.6px;background:#32ba89;opacity:.55"></div><div style="position:absolute;left:23px;top:32.5px;width:1px;height:1.6px;background:#d4d4d4;opacity:.55"></div><div style="position:absolute;left:24px;top:32.5px;width:5px;height:1.6px;background:#d4d4d4;opacity:.55"></div><div style="position:absolute;left:29px;top:32.5px;width:2px;height:1.6px;background:#d4d4d4;opacity:.55"></div><div style="position:absolute;left:31px;top:32.5px;width:1px;height:1.6px;background:#d4d4d4;opacity:.55"></div><div style="position:absolute;left:32px;top:32.5px;width:9px;height:1.6px;background:#d4d4d4;opacity:.55"></div><div style="position:absolute;left:41px;top:32.5px;width:1px;height:1.6px;background:#d4d4d4;opacity:.55"></div><div style="position:absolute;left:42px;top:32.5px;width:7px;height:1.6px;background:#569cd6;opacity:.55"></div><div style="position:absolute;left:49px;top:32.5px;width:1px;height:1.6px;background:#d4d4d4;opacity:.55"></div><div style="position:absolute;left:50px;top:32.5px;width:4px;height:1.6px;background:#086cb5;opacity:.55"></div><div style="position:absolute;left:54px;top:32.5px;width:1px;height:1.6px;background:#d4d4d4;opacity:.55"></div><div style="position:absolute;left:55px;top:32.5px;width:8px;height:1.6px;background:#d4d4d4;opacity:.55"></div><div style="position:absolute;left:63px;top:32.5px;width:1px;height:1.6px;background:#d4d4d4;opacity:.55"></div><div style="position:absolute;left:64px;top:32.5px;width:1px;height:1.6px;background:#d4d4d4;opacity:.55"></div><div style="position:absolute;left:12px;top:34.5px;width:1px;height:1.6px;background:#d4d4d4;opacity:.55"></div><div style="position:absolute;left:12px;top:38.5px;width:2px;height:1.6px;background:#6a9955;opacity:.55"></div><div style="position:absolute;left:15px;top:38.5px;width:3px;height:1.6px;background:#6a9955;opacity:.55"></div><div style="position:absolute;left:19px;top:38.5px;width:4px;height:1.6px;background:#6a9955;opacity:.55"></div><div style="position:absolute;left:24px;top:38.5px;width:11px;height:1.6px;background:#6a9955;opacity:.55"></div><div style="position:absolute;left:36px;top:38.5px;width:8px;height:1.6px;background:#6a9955;opacity:.55"></div><div style="position:absolute;left:45px;top:38.5px;width:4px;height:1.6px;background:#6a9955;opacity:.55"></div><div style="position:absolute;left:50px;top:38.5px;width:4px;height:1.6px;background:#6a9955;opacity:.55"></div><div style="position:absolute;left:55px;top:38.5px;width:7px;height:1.6px;background:#6a9955;opacity:.55"></div><div style="position:absolute;left:63px;top:38.5px;width:3px;height:1.6px;background:#6a9955;opacity:.55"></div><div style="position:absolute;left:67px;top:38.5px;width:7px;height:1.6px;background:#6a9955;opacity:.55"></div><div style="position:absolute;left:75px;top:38.5px;width:8px;height:1.6px;background:#6a9955;opacity:.55"></div><div style="position:absolute;left:12px;top:40.5px;width:8px;height:1.6px;background:#569cd6;opacity:.55"></div><div style="position:absolute;left:21px;top:40.5px;width:11px;height:1.6px;background:#d4d4d4;opacity:.55"></div><div style="position:absolute;left:32px;top:40.5px;width:1px;height:1.6px;background:#d4d4d4;opacity:.55"></div><div style="position:absolute;left:34px;top:40.5px;width:8px;height:1.6px;background:#b0b0b8;opacity:.55"></div><div style="position:absolute;left:43px;top:40.5px;width:3px;height:1.6px;background:#b0b0b8;opacity:.55"></div><div style="position:absolute;left:16px;top:42.5px;width:7px;height:1.6px;background:#569cd6;opacity:.55"></div><div style="position:absolute;left:24px;top:42.5px;width:8px;height:1.6px;background:#d4d4d4;opacity:.55"></div><div style="position:absolute;left:16px;top:44.5px;width:7px;height:1.6px;background:#569cd6;opacity:.55"></div><div style="position:absolute;left:24px;top:44.5px;width:11px;height:1.6px;background:#d4d4d4;opacity:.55"></div><div style="position:absolute;left:16px;top:46.5px;width:7px;height:1.6px;background:#569cd6;opacity:.55"></div><div style="position:absolute;left:24px;top:46.5px;width:8px;height:1.6px;background:#d4d4d4;opacity:.55"></div><div style="position:absolute;left:16px;top:48.5px;width:7px;height:1.6px;background:#569cd6;opacity:.55"></div><div style="position:absolute;left:24px;top:48.5px;width:14px;height:1.6px;background:#d4d4d4;opacity:.55"></div><div style="position:absolute;left:16px;top:50.5px;width:5px;height:1.6px;background:#007aa6;opacity:.55"></div><div style="position:absolute;left:22px;top:50.5px;width:8px;height:1.6px;background:#9e7e08;opacity:.55"></div><div style="position:absolute;left:31px;top:50.5px;width:10px;height:1.6px;background:#d4d4d4;opacity:.55"></div><div style="position:absolute;left:12px;top:54.5px;width:1px;height:1.6px;background:#d4d4d4;opacity:.55"></div><div style="position:absolute;left:14px;top:54.5px;width:8px;height:1.6px;background:#32ba89;opacity:.55"></div><div style="position:absolute;left:23px;top:54.5px;width:1px;height:1.6px;background:#d4d4d4;opacity:.55"></div><div style="position:absolute;left:16px;top:56.5px;width:7px;height:1.6px;background:#569cd6;opacity:.55"></div><div style="position:absolute;left:24px;top:56.5px;width:9px;height:1.6px;background:#d4d4d4;opacity:.55"></div><div style="position:absolute;left:34px;top:56.5px;width:1px;height:1.6px;background:#d4d4d4;opacity:.55"></div><div style="position:absolute;left:36px;top:56.5px;width:26px;height:1.6px;background:#d4d4d4;opacity:.55"></div><div style="position:absolute;left:62px;top:56.5px;width:1px;height:1.6px;background:#d4d4d4;opacity:.55"></div><div style="position:absolute;left:20px;top:58.5px;width:8px;height:1.6px;background:#d4d4d4;opacity:.55"></div><div style="position:absolute;left:52px;top:58.5px;width:2px;height:1.6px;background:#6a9955;opacity:.55"></div><div style="position:absolute;left:55px;top:58.5px;width:7px;height:1.6px;background:#6a9955;opacity:.55"></div><div style="position:absolute;left:63px;top:58.5px;width:7px;height:1.6px;background:#6a9955;opacity:.55"></div><div style="position:absolute;left:20px;top:60.5px;width:11px;height:1.6px;background:#d4d4d4;opacity:.55"></div><div style="position:absolute;left:52px;top:60.5px;width:2px;height:1.6px;background:#6a9955;opacity:.55"></div><div style="position:absolute;left:55px;top:60.5px;width:10px;height:1.6px;background:#6a9955;opacity:.55"></div><div style="position:absolute;left:20px;top:62.5px;width:8px;height:1.6px;background:#d4d4d4;opacity:.55"></div><div style="position:absolute;left:52px;top:62.5px;width:2px;height:1.6px;background:#6a9955;opacity:.55"></div><div style="position:absolute;left:55px;top:62.5px;width:9px;height:1.6px;background:#6a9955;opacity:.55"></div><div style="position:absolute;left:65px;top:62.5px;width:7px;height:1.6px;background:#6a9955;opacity:.55"></div><div style="position:absolute;left:20px;top:64.5px;width:14px;height:1.6px;background:#d4d4d4;opacity:.55"></div><div style="position:absolute;left:52px;top:64.5px;width:2px;height:1.6px;background:#6a9955;opacity:.55"></div><div style="position:absolute;left:55px;top:64.5px;width:13px;height:1.6px;background:#6a9955;opacity:.55"></div><div style="position:absolute;left:20px;top:66.5px;width:7px;height:1.6px;background:#569cd6;opacity:.55"></div><div style="position:absolute;left:27px;top:66.5px;width:1px;height:1.6px;background:#d4d4d4;opacity:.55"></div><div style="position:absolute;left:28px;top:66.5px;width:4px;height:1.6px;background:#086cb5;opacity:.55"></div><div style="position:absolute;left:32px;top:66.5px;width:1px;height:1.6px;background:#d4d4d4;opacity:.55"></div><div style="position:absolute;left:33px;top:66.5px;width:1px;height:1.6px;background:#d4d4d4;opacity:.55"></div><div style="position:absolute;left:52px;top:66.5px;width:2px;height:1.6px;background:#6a9955;opacity:.55"></div><div style="position:absolute;left:55px;top:66.5px;width:14px;height:1.6px;background:#6a9955;opacity:.55"></div><div style="position:absolute;left:20px;top:68.5px;width:4px;height:1.6px;background:#086cb5;opacity:.55"></div><div style="position:absolute;left:24px;top:68.5px;width:18px;height:1.6px;background:#d4d4d4;opacity:.55"></div><div style="position:absolute;left:52px;top:68.5px;width:2px;height:1.6px;background:#6a9955;opacity:.55"></div><div style="position:absolute;left:55px;top:68.5px;width:17px;height:1.6px;background:#6a9955;opacity:.55"></div><div style="position:absolute;left:20px;top:70.5px;width:10px;height:1.6px;background:#d4d4d4;opacity:.55"></div><div style="position:absolute;left:52px;top:70.5px;width:2px;height:1.6px;background:#6a9955;opacity:.55"></div><div style="position:absolute;left:55px;top:70.5px;width:7px;height:1.6px;background:#6a9955;opacity:.55"></div><div style="position:absolute;left:63px;top:70.5px;width:3px;height:1.6px;background:#6a9955;opacity:.55"></div><div style="position:absolute;left:67px;top:70.5px;width:10px;height:1.6px;background:#6a9955;opacity:.55"></div><div style="position:absolute;left:16px;top:72.5px;width:1px;height:1.6px;background:#d4d4d4;opacity:.55"></div><div style="position:absolute;left:17px;top:72.5px;width:1px;height:1.6px;background:#d4d4d4;opacity:.55"></div><div style="position:absolute;left:16px;top:74.5px;width:20px;height:1.6px;background:#d4d4d4;opacity:.55"></div><div style="position:absolute;left:36px;top:74.5px;width:1px;height:1.6px;background:#d4d4d4;opacity:.55"></div><div style="position:absolute;left:37px;top:74.5px;width:9px;height:1.6px;background:#d4d4d4;opacity:.55"></div><div style="position:absolute;left:46px;top:74.5px;width:1px;height:1.6px;background:#d4d4d4;opacity:.55"></div><div style="position:absolute;left:48px;top:74.5px;width:1px;height:1.6px;background:#d4d4d4;opacity:.55"></div><div style="position:absolute;left:50px;top:74.5px;width:4px;height:1.6px;background:#569cd6;opacity:.55"></div><div style="position:absolute;left:54px;top:74.5px;width:1px;height:1.6px;background:#d4d4d4;opacity:.55"></div><div style="position:absolute;left:12px;top:76.5px;width:1px;height:1.6px;background:#d4d4d4;opacity:.55"></div><div style="position:absolute;left:12px;top:80.5px;width:8px;height:1.6px;background:#569cd6;opacity:.55"></div><div style="position:absolute;left:21px;top:80.5px;width:8px;height:1.6px;background:#d4d4d4;opacity:.55"></div><div style="position:absolute;left:29px;top:80.5px;width:7px;height:1.6px;background:#569cd6;opacity:.55"></div><div style="position:absolute;left:37px;top:80.5px;width:10px;height:1.6px;background:#d4d4d4;opacity:.55"></div><div style="position:absolute;left:48px;top:80.5px;width:5px;height:1.6px;background:#007aa6;opacity:.55"></div><div style="position:absolute;left:54px;top:80.5px;width:8px;height:1.6px;background:#9e7e08;opacity:.55"></div><div style="position:absolute;left:63px;top:80.5px;width:5px;height:1.6px;background:#d4d4d4;opacity:.55"></div><div style="position:absolute;left:69px;top:80.5px;width:8px;height:1.6px;background:#b0b0b8;opacity:.55"></div><div style="position:absolute;left:78px;top:80.5px;width:3px;height:1.6px;background:#b0b0b8;opacity:.55"></div><div style="position:absolute;left:16px;top:82.5px;width:8px;height:1.6px;background:#32ba89;opacity:.55"></div><div style="position:absolute;left:16px;top:84.5px;width:14px;height:1.6px;background:#d4d4d4;opacity:.55"></div><div style="position:absolute;left:12px;top:86.5px;width:1px;height:1.6px;background:#d4d4d4;opacity:.55"></div><div style="position:absolute;left:16px;top:88.5px;width:7px;height:1.6px;background:#007aa6;opacity:.55"></div><div style="position:absolute;left:23px;top:88.5px;width:33px;height:1.6px;background:#d4d4d4;opacity:.55"></div><div style="position:absolute;left:57px;top:88.5px;width:3px;height:1.6px;background:#ce9178;opacity:.55"></div><div style="position:absolute;left:61px;top:88.5px;width:4px;height:1.6px;background:#ce9178;opacity:.55"></div><div style="position:absolute;left:66px;top:88.5px;width:7px;height:1.6px;background:#ce9178;opacity:.55"></div><div style="position:absolute;left:74px;top:88.5px;width:5px;height:1.6px;background:#ce9178;opacity:.55"></div><div style="position:absolute;left:79px;top:88.5px;width:2px;height:1.6px;background:#d4d4d4;opacity:.55"></div><div style="position:absolute;left:16px;top:90.5px;width:6px;height:1.6px;background:#c97539;opacity:.55"></div><div style="position:absolute;left:23px;top:90.5px;width:32px;height:1.6px;background:#d4d4d4;opacity:.55"></div><div style="position:absolute;left:16px;top:92.5px;width:6px;height:1.6px;background:#569cd6;opacity:.55"></div><div style="position:absolute;left:23px;top:92.5px;width:11px;height:1.6px;background:#d4d4d4;opacity:.55"></div><div style="position:absolute;left:35px;top:92.5px;width:1px;height:1.6px;background:#d4d4d4;opacity:.55"></div><div style="position:absolute;left:37px;top:92.5px;width:3px;height:1.6px;background:#007aa6;opacity:.55"></div><div style="position:absolute;left:40px;top:92.5px;width:13px;height:1.6px;background:#d4d4d4;opacity:.55"></div><div style="position:absolute;left:54px;top:92.5px;width:1px;height:1.6px;background:#d4d4d4;opacity:.55"></div><div style="position:absolute;left:55px;top:92.5px;width:6px;height:1.6px;background:#569cd6;opacity:.55"></div><div style="position:absolute;left:61px;top:92.5px;width:3px;height:1.6px;background:#d4d4d4;opacity:.55"></div><div style="position:absolute;left:16px;top:94.5px;width:24px;height:1.6px;background:#d4d4d4;opacity:.55"></div><div style="position:absolute;left:41px;top:94.5px;width:1px;height:1.6px;background:#d4d4d4;opacity:.55"></div><div style="position:absolute;left:43px;top:94.5px;width:12px;height:1.6px;background:#d4d4d4;opacity:.55"></div><div style="position:absolute;left:12px;top:96.5px;width:1px;height:1.6px;background:#d4d4d4;opacity:.55"></div><div style="position:absolute;left:12px;top:100.5px;width:2px;height:1.6px;background:#6a9955;opacity:.55"></div><div style="position:absolute;left:15px;top:100.5px;width:2px;height:1.6px;background:#6a9955;opacity:.55"></div><div style="position:absolute;left:18px;top:100.5px;width:8px;height:1.6px;background:#6a9955;opacity:.55"></div><div style="position:absolute;left:27px;top:100.5px;width:5px;height:1.6px;background:#6a9955;opacity:.55"></div><div style="position:absolute;left:33px;top:100.5px;width:4px;height:1.6px;background:#6a9955;opacity:.55"></div><div style="position:absolute;left:38px;top:100.5px;width:3px;height:1.6px;background:#6a9955;opacity:.55"></div><div style="position:absolute;left:42px;top:100.5px;width:7px;height:1.6px;background:#6a9955;opacity:.55"></div><div style="position:absolute;left:50px;top:100.5px;width:6px;height:1.6px;background:#6a9955;opacity:.55"></div><div style="position:absolute;left:57px;top:100.5px;width:2px;height:1.6px;background:#6a9955;opacity:.55"></div><div style="position:absolute;left:60px;top:100.5px;width:3px;height:1.6px;background:#6a9955;opacity:.55"></div><div style="position:absolute;left:64px;top:100.5px;width:9px;height:1.6px;background:#6a9955;opacity:.55"></div><div style="position:absolute;left:12px;top:102.5px;width:8px;height:1.6px;background:#569cd6;opacity:.55"></div><div style="position:absolute;left:21px;top:102.5px;width:9px;height:1.6px;background:#d4d4d4;opacity:.55"></div><div style="position:absolute;left:30px;top:102.5px;width:7px;height:1.6px;background:#007aa6;opacity:.55"></div><div style="position:absolute;left:38px;top:102.5px;width:8px;height:1.6px;background:#d4d4d4;opacity:.55"></div><div style="position:absolute;left:47px;top:102.5px;width:7px;height:1.6px;background:#007aa6;opacity:.55"></div><div style="position:absolute;left:55px;top:102.5px;width:14px;height:1.6px;background:#d4d4d4;opacity:.55"></div><div style="position:absolute;left:70px;top:102.5px;width:8px;height:1.6px;background:#32ba89;opacity:.55"></div><div style="position:absolute;left:79px;top:102.5px;width:9px;height:1.6px;background:#d4d4d4;opacity:.55"></div><div style="position:absolute;left:89px;top:102.5px;width:1px;height:1.6px;background:#d4d4d4;opacity:.55"></div><div style="position:absolute;left:91px;top:102.5px;width:8px;height:1.6px;background:#b0b0b8;opacity:.55"></div><div style="position:absolute;left:100px;top:102.5px;width:3px;height:1.6px;background:#b0b0b8;opacity:.55"></div><div style="position:absolute;left:16px;top:104.5px;width:29px;height:1.6px;background:#d4d4d4;opacity:.55"></div><div style="position:absolute;left:16px;top:106.5px;width:8px;height:1.6px;background:#d4d4d4;opacity:.55"></div><div style="position:absolute;left:16px;top:108.5px;width:13px;height:1.6px;background:#d4d4d4;opacity:.55"></div><div style="position:absolute;left:16px;top:110.5px;width:2px;height:1.6px;background:#d4d4d4;opacity:.55"></div><div style="position:absolute;left:12px;top:112.5px;width:1px;height:1.6px;background:#d4d4d4;opacity:.55"></div><div style="position:absolute;left:8px;top:114.5px;width:1px;height:1.6px;background:#d4d4d4;opacity:.55"></div></div>
<div id="vscroll"><div style="position:absolute;left:0;top:196px;width:12px;height:2px;background:#a0a0a5"></div></div>
<div id="editor">
<div class="guide" style="left:457px;top:185px;height:589px;background:#404040"></div>
<div class="guide" style="left:491px;top:337px;height:19px;background:#404040"></div>
<div class="guide" style="left:491px;top:432px;height:114px;background:#707070"></div>
<div class="guide" style="left:491px;top:565px;height:190px;background:#404040"></div>
<div class="guide" style="left:524px;top:584px;height:133px;background:#404040"></div>
<div class="cl" style="top:33px"><span class="c">// SPDX-License-Identifier: MIT</span></div>
<div class="lnum" style="top:33px">1</div>
<div class="cl" style="top:52px"><span class="k">pragma</span> <span class="k">solidity</span> <span class="n">0.8.9</span>;</div>
<div class="lnum" style="top:52px">2</div>
<div class="cl" style="top:71px"></div>
<div class="lnum" style="top:71px">3</div>
<div class="cl" style="top:90px"><span class="k">import</span> <span class="s">&quot;@api3/airnode-protocol/contracts/rrp/requesters/RrpRequesterV0.sol&quot;</span>;</div>
<div class="lnum" style="top:90px">4</div>
<div class="cl" style="top:109px"><span class="k">import</span> <span class="s">&quot;@openzeppelin/contracts@4.9.5/access/Ownable.sol&quot;</span>;</div>
<div class="lnum" style="top:109px">5</div>
<div class="cl" style="top:128px"></div>
<div class="lnum" style="top:128px">6</div>
<div class="cl" style="top:147px"><span class="c">// A Requester that will return the requested data by calling the specified Airnode.</span></div>
<div class="lnum" style="top:147px">7</div>
<div class="cl" style="top:166px"><span class="k">contract</span> <span class="id">Requester</span> <span class="k">is</span> <span class="id">RrpRequesterV0</span>, <span class="id">Ownable</span> <span class="b1">{</span></div>
<div class="lnum" style="top:166px">8</div>
<div class="cl" style="top:185px">    <span class="k">mapping</span><span class="b2">(</span><span class="k">bytes32</span> =<span class="r">&gt;</span> <span class="k">bool</span><span class="b2">)</span> <span class="g">public</span> <span class="id">incomingFulfillments</span>;</div>
<div class="lnum" style="top:185px">9</div>
<div class="cl" style="top:204px">    <span class="k">mapping</span><span class="b2">(</span><span class="k">bytes32</span> =<span class="r">&gt;</span> <span class="k">int256</span><span class="b2">)</span> <span class="g">public</span> <span class="id">fulfilledData</span>;</div>
<div class="lnum" style="top:204px">10</div>
<div class="cl" style="top:223px"></div>
<div class="lnum" style="top:223px">11</div>
<div class="cl" style="top:242px">    <span class="c">// Make sure you specify the right _rrpAddress for your chain while deploying the contract.</span></div>
<div class="lnum" style="top:242px">12</div>
<div class="cl" style="top:261px">    <span class="p">constructor</span><span class="b2">(</span><span class="k">address</span> <span class="id">_rrpAddress</span><span class="b2">)</span> <span class="id">RrpRequesterV0</span><span class="b2">(</span><span class="id">_rrpAddress</span><span class="b2">)</span> <span class="b2">{}</span><span class="gas" style="left:586.8px"><svg class="pump" viewBox="0 0 512 512"><path fill="#8a8a8e" d="M336 448H16c-8.8 0-16 7.2-16 16v32c0 8.8 7.2 16 16 16h320c8.8 0 16-7.2 16-16v-32c0-8.8-7.2-16-16-16zm157.2-340.7l-81-81c-6.2-6.2-16.4-6.2-22.6 0l-11.3 11.3c-6.2 6.2-6.2 16.4 0 22.6L416 97.9V160c0 28.1 20.9 51.3 48 55.2V376c0 13.2-10.8 24-24 24s-24-10.8-24-24v-32c0-48.6-39.4-88-88-88h-8V64c0-35.3-28.7-64-64-64H96C60.7 0 32 28.7 32 64v352h288V304h8c22.1 0 40 17.9 40 40v27.8c0 37.7 27 72 64.5 75.9 43 4.3 79.5-29.5 79.5-71.7V152.6c0-17-6.8-33.3-18.8-45.3zM256 192H96V64h160v128z"/></svg>infinite gas 783800 gas</span></div>
<div class="lnum" style="top:261px">13</div>
<div class="cl" style="top:280px"></div>
<div class="lnum" style="top:280px">14</div>
<div class="cl" style="top:299px">    <span class="c">// To receive funds from the sponsor wallet and send them to the owner.</span></div>
<div class="lnum" style="top:299px">15</div>
<div class="cl" style="top:318px">    <span class="p">receive</span><span class="b2">()</span> <span class="g">external</span> <span class="g">payable</span> <span class="b2">{</span><span class="gas" style="left:292.8px"><svg class="pump" viewBox="0 0 512 512"><path fill="#8a8a8e" d="M336 448H16c-8.8 0-16 7.2-16 16v32c0 8.8 7.2 16 16 16h320c8.8 0 16-7.2 16-16v-32c0-8.8-7.2-16-16-16zm157.2-340.7l-81-81c-6.2-6.2-16.4-6.2-22.6 0l-11.3 11.3c-6.2 6.2-6.2 16.4 0 22.6L416 97.9V160c0 28.1 20.9 51.3 48 55.2V376c0 13.2-10.8 24-24 24s-24-10.8-24-24v-32c0-48.6-39.4-88-88-88h-8V64c0-35.3-28.7-64-64-64H96C60.7 0 32 28.7 32 64v352h288V304h8c22.1 0 40 17.9 40 40v27.8c0 37.7 27 72 64.5 75.9 43 4.3 79.5-29.5 79.5-71.7V152.6c0-17-6.8-33.3-18.8-45.3zM256 192H96V64h160v128z"/></svg>undefined gas</span></div>
<div class="lnum" style="top:318px">16</div>
<div class="cl" style="top:337px">        <span class="g">payable</span><span class="b3">(</span><span class="id">owner</span><span class="b1">()</span><span class="b3">)</span>.<span class="id">transfer</span><span class="b3">(</span><span class="k">address</span><span class="b1">(</span><span class="i">this</span><span class="b1">)</span>.<span class="id">balance</span><span class="b3">)</span>;</div>
<div class="lnum" style="top:337px">17</div>
<div class="cl" style="top:356px">    <span class="b2">}</span></div>
<div class="lnum" style="top:356px">18</div>
<div class="cl" style="top:375px"></div>
<div class="lnum" style="top:375px">19</div>
<div class="cl" style="top:394px">    <span class="c">// The main makeRequest function that will trigger the Airnode request.</span></div>
<div class="lnum" style="top:394px">20</div>
<div class="cl" style="top:413px">    <span class="k">function</span> <span class="id">makeRequest</span><span class="b2">(</span><span class="gas" style="left:234.0px"><svg class="pump" viewBox="0 0 512 512"><path fill="#8a8a8e" d="M336 448H16c-8.8 0-16 7.2-16 16v32c0 8.8 7.2 16 16 16h320c8.8 0 16-7.2 16-16v-32c0-8.8-7.2-16-16-16zm157.2-340.7l-81-81c-6.2-6.2-16.4-6.2-22.6 0l-11.3 11.3c-6.2 6.2-6.2 16.4 0 22.6L416 97.9V160c0 28.1 20.9 51.3 48 55.2V376c0 13.2-10.8 24-24 24s-24-10.8-24-24v-32c0-48.6-39.4-88-88-88h-8V64c0-35.3-28.7-64-64-64H96C60.7 0 32 28.7 32 64v352h288V304h8c22.1 0 40 17.9 40 40v27.8c0 37.7 27 72 64.5 75.9 43 4.3 79.5-29.5 79.5-71.7V152.6c0-17-6.8-33.3-18.8-45.3zM256 192H96V64h160v128z"/></svg>infinite gas</span></div>
<div class="lnum" style="top:413px">21</div>
<div class="cl" style="top:432px">        <span class="k">address</span> <span class="id">airnode</span>,</div>
<div class="lnum" style="top:432px">22</div>
<div class="cl" style="top:451px">        <span class="k">bytes32</span> <span class="id">endpointId</span>,</div>
<div class="lnum" style="top:451px">23</div>
<div class="cl" style="top:470px">        <span class="k">address</span> <span class="id">sponsor</span>,</div>
<div class="lnum" style="top:470px">24</div>
<div class="cl" style="top:489px">        <span class="k">address</span> <span class="id">sponsorWallet</span>,</div>
<div class="lnum" style="top:489px">25</div>
<div class="cl" style="top:508px">        <span class="bb">bytes</span> <span class="l">calldata</span> <span class="id">parameters</span></div>
<div class="lnum" style="top:508px">26</div>
<div class="cl" style="top:527px"></div>
<div class="lnum cur" style="top:527px">27</div>
<div class="cl" style="top:546px">    <span class="b2">)</span> <span class="g">external</span> <span class="b2">{</span></div>
<div class="lnum" style="top:546px">28</div>
<div class="cl" style="top:565px">        <span class="k">bytes32</span> <span class="id">requestId</span> = <span class="id">airnodeRrp</span>.<span class="id">makeFullRequest</span><span class="b3">(</span></div>
<div class="lnum" style="top:565px">29</div>
<div class="cl" style="top:584px">            <span class="id">airnode</span>,                        <span class="c">// airnode address</span></div>
<div class="lnum" style="top:584px">30</div>
<div class="cl" style="top:603px">            <span class="id">endpointId</span>,                     <span class="c">// endpointId</span></div>
<div class="lnum" style="top:603px">31</div>
<div class="cl" style="top:622px">            <span class="id">sponsor</span>,                        <span class="c">// sponsor&#x27;s address</span></div>
<div class="lnum" style="top:622px">32</div>
<div class="cl" style="top:641px">            <span class="id">sponsorWallet</span>,                  <span class="c">// sponsorWallet</span></div>
<div class="lnum" style="top:641px">33</div>
<div class="cl" style="top:660px">            <span class="k">address</span><span class="b1">(</span><span class="i">this</span><span class="b1">)</span>,                  <span class="c">// fulfillAddress</span></div>
<div class="lnum" style="top:660px">34</div>
<div class="cl" style="top:679px">            <span class="i">this</span>.<span class="id">fulfill</span>.<span class="id">selector</span>,          <span class="c">// fulfillFunctionId</span></div>
<div class="lnum" style="top:679px">35</div>
<div class="cl" style="top:698px">            <span class="id">parameters</span>                      <span class="c">// encoded API parameters</span></div>
<div class="lnum" style="top:698px">36</div>
<div class="cl" style="top:717px">        <span class="b3">)</span>;</div>
<div class="lnum" style="top:717px">37</div>
<div class="cl" style="top:736px">        <span class="id">incomingFulfillments</span><span class="b3">[</span><span class="id">requestId</span><span class="b3">]</span> = <span class="k">true</span>;</div>
<div class="lnum" style="top:736px">38</div>
<div class="cl" style="top:755px">    <span class="b2">}</span></div>
<div class="lnum" style="top:755px">39</div>
</div>
<div style="position:absolute;left:370px;top:0;width:1549px;height:33px;background:#222336"></div>
<div style="position:absolute;left:408px;top:0;width:1px;height:33px;background:#3b3d52"></div>
<div style="position:absolute;left:474px;top:0;width:1px;height:33px;background:#3b3d52"></div>
<svg style="left:386px;top:8px" width="14" height="16" viewBox="0 0 14 16"><path d="M1 2.4C1 1.1 2.3.4 3.4 1.1l9.2 5.6c1 .6 1 2 0 2.6L3.4 14.9C2.3 15.6 1 14.9 1 13.6z" fill="#32ba89"/></svg>
<svg style="left:416px;top:6px" width="18" height="20" viewBox="416 6 18 20"><rect x="424.1" y="7.8" width="1.3" height="2.4" fill="#1ee1f0"/><rect x="418" y="12" width="3.2" height="3.9" fill="#1f9aab"/><rect x="428.9" y="12" width="3.2" height="3.9" fill="#1f9aab"/><rect x="421" y="9.9" width="8" height="8.2" rx="1.6" fill="#1ee1f0"/><rect x="422.1" y="12.2" width="1.8" height="1.7" fill="#222336"/><rect x="426.1" y="12.2" width="1.8" height="1.7" fill="#222336"/><g fill="#19a9b5"><rect x="422.3" y="15.3" width="1.2" height="1.4"/><rect x="424.4" y="15.3" width="1.2" height="1.4"/><rect x="426.5" y="15.3" width="1.2" height="1.4"/></g><path d="M418 24.1v-2.6c0-1.5 1.2-2.6 2.6-2.6h8.9c1.4 0 2.6 1.1 2.6 2.6v2.6h-3.3v-2.9h-7.6v2.9z" fill="#1ee1f0"/><g fill="#19a9b5"><rect x="422.1" y="22.1" width="1.3" height="1.9"/><rect x="424.4" y="22.1" width="1.3" height="1.9"/><rect x="426.6" y="22.1" width="1.3" height="1.9"/></g></svg>
<svg style="left:442px;top:8px" width="23" height="15" viewBox="0 0 23 15"><rect x="1.3" y="1.3" width="20.4" height="12.4" rx="6.2" stroke="#1ee1f0" stroke-width="2.6" fill="none"/><circle cx="7.5" cy="7.5" r="3.8" fill="#1ee1f0"/></svg>
<svg style="left:483px;top:8px" width="17" height="16" viewBox="0 0 17 16"><circle cx="6.5" cy="6.5" r="6.5" fill="#babbcc"/><path d="M11 11l5 4.3" stroke="#babbcc" stroke-width="2" stroke-linecap="round"/><rect x="3.5" y="5.8" width="6" height="1.5" fill="#222336"/></svg>
<svg style="left:509px;top:8px" width="17" height="16" viewBox="0 0 17 16"><circle cx="6.5" cy="6.5" r="6.5" fill="#babbcc"/><path d="M11 11l5 4.3" stroke="#babbcc" stroke-width="2" stroke-linecap="round"/><rect x="3.5" y="5.8" width="6" height="1.5" fill="#222336"/><rect x="5.75" y="3.5" width="1.5" height="6" fill="#222336"/></svg>
<svg style="left:540px;top:8px" width="16" height="15" viewBox="0 0 16 15"><path d="M1 7L8 1l7 6M3 6v8h3.5v-4h3v4H13V6" stroke="#babbcc" stroke-width="1.2" fill="none" stroke-linejoin="round"/></svg>
<div class="tr" style="left:561px;top:7px;color:#a9aac4">Home</div>
<div style="position:absolute;left:625px;top:0;width:222px;height:33px;background:#2a2c3f;border-left:1px solid #3b3d52;border-right:1px solid #3b3d52"></div>
<svg style="left:635px;top:10px" width="8" height="12" viewBox="0 0 8 12"><polygon points="2.2,0.2 6,0.2 7.85,3.7 4.2,3.85 2.3,6.7 0.3,3.5" fill="#a5a6c4"/><polygon points="6,6 7.85,8.7 6,12 2,12 0.5,9.3 4.2,8.9" fill="#a5a6c4"/></svg>
<div class="tr" style="left:650px;top:7px;color:#ffffff">RequesterWithWithdrawal.sol</div>
<svg style="left:826px;top:11px" width="11" height="10" viewBox="0 0 11 10"><path d="M1 .5l9 9M10 .5l-9 9" stroke="#babbcc" stroke-width="1.8"/></svg>
<div id="tline"></div>
<div id="tbar">
<svg style="left:8px;top:12px" width="11" height="13" viewBox="0 0 11 13"><path d="M1 1l4.5 4.5L10 1M1 6.5L5.5 11 10 6.5" stroke="#babbcc" stroke-width="1.5" fill="none"/></svg>
<div class="tr" style="left:995px;top:9px;font-size:13px;color:#babbcc">0</div>
<div style="position:absolute;left:1027px;top:10px;width:15px;height:15px;border:1px solid #4d4f66;border-radius:2px;background:transparent"></div>
<div class="tr" style="left:1050px;top:8px;font-size:13px;color:#5d6079">Listen on all transactions</div>
<svg style="left:1218px;top:12px" width="14" height="13" viewBox="0 0 14 13"><circle cx="5.6" cy="5.6" r="4.6" stroke="#babbcc" stroke-width="1.8" fill="none"/><path d="M9 9l4 3.5" stroke="#babbcc" stroke-width="2" stroke-linecap="round"/></svg>
<div style="position:absolute;left:1241px;top:0;width:276px;height:35px;background:#34364b;border:1px solid #3f4158;border-radius:2px"></div>
<div class="tr" style="left:1253px;top:9px;font-size:14px;color:#9a9bb0">Filter with transaction hash or address</div>
<svg style="left:1528px;top:11px" width="14" height="14" viewBox="0 0 14 14"><circle cx="7" cy="7" r="6" stroke="#babbcc" stroke-width="1.5" fill="none"/><path d="M2.8 2.8l8.4 8.4" stroke="#babbcc" stroke-width="1.5"/></svg>
</div>
<div style="position:absolute;left:370px;top:806px;width:1549px;height:152px;overflow:hidden">
<div class="term" style="left:40px;top:-6px;">The following libraries are accessible:</div>
<div style="position:absolute;left:30px;top:12px;width:4.4px;height:4.4px;border-radius:50%;background:#a9aac6"></div>
<div style="position:absolute;left:30px;top:27.399999999999977px;width:4.4px;height:4.4px;border-radius:50%;background:#a9aac6"></div>
<div style="position:absolute;left:30px;top:41.299999999999955px;width:4.4px;height:4.4px;border-radius:50%;background:#a9aac6"></div>
<div class="term" style="left:40px;top:8px;"><u>web3.js</u></div>
<div class="term" style="left:40px;top:23px;"><u>ethers.js</u></div>
<div class="term" style="left:40px;top:37px;">sol-gpt <i>&lt;your Solidity question here&gt;</i></div>
<div class="term" style="left:40px;top:67px;">Type the library name to see available commands.</div>
<div class="term" style="left:40px;top:86px;">Solidity copilot not activated!</div>
<div class="term" style="left:8px;top:137px;">&gt;</div>
<div style="position:absolute;left:1536px;top:0;width:6px;height:126px;background:#2d2e33"></div>
<div style="position:absolute;left:1537.3px;top:82px;width:3.6px;height:42px;background:#a8a8a8;border-radius:2px"></div>
</div>
</div></body></html>
